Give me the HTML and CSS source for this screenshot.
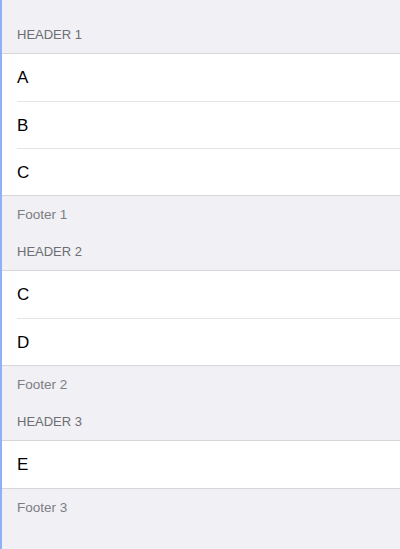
FILE: index.html
```html
<!DOCTYPE html>
<html lang="en">
<head>
  <meta charset="UTF-8" />
  <meta name="viewport" content="width=device-width, initial-scale=1.0" />
  <title>Sections</title>
  <link rel="stylesheet" href="styles.css">
</head>
<body>
  <div class="table">
    <div class="section">
      <div class="header">HEADER 1</div>
      <div class="rows">
        <div class="row">A</div>
        <div class="row">B</div>
        <div class="row">C</div>
      </div>
      <div class="footer">Footer 1</div>
    </div>

    <div class="section">
      <div class="header">HEADER 2</div>
      <div class="rows">
        <div class="row">C</div>
        <div class="row">D</div>
      </div>
      <div class="footer">Footer 2</div>
    </div>

    <div class="section">
      <div class="header">HEADER 3</div>
      <div class="rows">
        <div class="row">E</div>
      </div>
      <div class="footer">Footer 3</div>
    </div>
  </div>
</body>
</html>
```

FILE: styles.css
```css
html, body {
  height: 100%;
}
body {
  margin: 0;
  font-family: "Liberation Sans", Arial, sans-serif;
  background-color: #f0f0f5;
  border-left: 2px solid #8db1f4;
  box-sizing: border-box;
}
.table {
  padding-top: 6px;
}
.header {
  padding: 21px 15px 10px;
  font-size: 13px;
  line-height: 16px;
  color: #6d6d72;
}
.rows {
  background-color: #fff;
  border-top: 1px solid #d6d6da;
  border-bottom: 1px solid #d6d6da;
}
.row {
  height: 46px;
  line-height: 47px;
  margin-left: 15px;
  font-size: 17px;
  color: #000;
  border-top: 1px solid #e4e4e8;
}
.row:first-child {
  border-top: none;
  height: 47px;
}
.footer {
  padding: 11px 15px 0;
  font-size: 13.5px;
  line-height: 16px;
  color: #7d7d82;
}
```
